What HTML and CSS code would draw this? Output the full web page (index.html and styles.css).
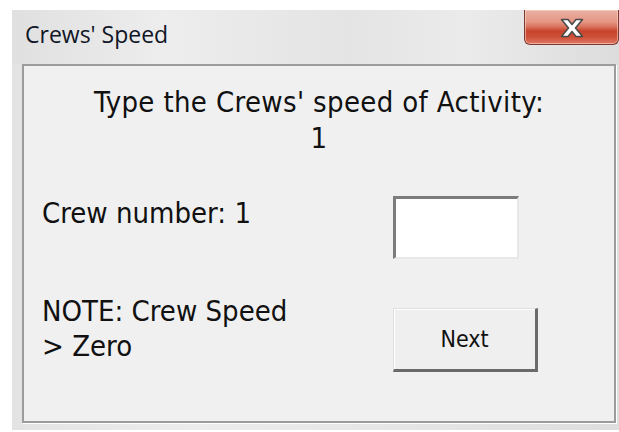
FILE: index.html
```html
<!DOCTYPE html>
<html lang="en">
<head>
<meta charset="utf-8">
<title>Crews' Speed</title>
<link rel="stylesheet" href="styles.css">
</head>
<body>
<div class="window">
  <div class="titlebar">
    <span class="title">Crews' Speed</span>
    <button class="close" type="button" aria-label="Close">
      <svg class="close-x" width="26" height="20" viewBox="0 0 26 20">
        <path d="M2.5 1.5h6.5l4 5 4-5h6.5l-7 8.5 7 8.5H17l-4-5-4 5H2.5l7-8.5z" fill="#ffffff" stroke="#4a4a4a" stroke-width="1.5" stroke-linejoin="round"/>
      </svg>
    </button>
  </div>
  <div class="panel">
    <p class="heading">Type the Crews' speed of Activity:<br>1</p>
    <div class="form">
      <label class="label" for="speed">Crew number: 1</label>
      <input class="field" id="speed" type="text">
      <p class="label">NOTE: Crew Speed &gt; Zero</p>
      <button class="next" type="button">Next</button>
    </div>
  </div>
</div>
</body>
</html>
```

FILE: styles.css
```css
html, body {
  margin: 0;
  padding: 0;
  background: #ffffff;
}

body {
  width: 619px;
  height: 432px;
  overflow: hidden;
}

.window {
  box-sizing: border-box;
  margin: 10px 0 0 12px;
  width: 607px;
  height: 420px;
  background: linear-gradient(90deg, #e3e3e3 0%, #ececec 30%, #e6e6e6 60%, #dedede 100%);
  display: flex;
  flex-direction: column;
}

.titlebar {
  height: 54px;
  display: flex;
  justify-content: space-between;
  align-items: flex-start;
  background: linear-gradient(90deg, #e0e0e0 0%, #ededed 25%, #e4e4e4 55%, #ebebeb 75%, #dcdcdc 100%);
}

.title {
  margin: 9px 0 0 13px;
  font-family: "Open Sans", "Noto Sans", sans-serif;
  font-size: 23px;
  line-height: 30px;
  color: #101626;
}

.close {
  box-sizing: border-box;
  width: 95px;
  height: 35px;
  margin: 0;
  padding: 0;
  border: 1px solid #7d3a2e;
  border-top: none;
  border-radius: 0 0 6px 6px;
  background: linear-gradient(180deg, #eab0a4 0%, #e39683 35%, #d8705a 50%, #c8432b 62%, #cf5038 80%, #dd7a66 100%);
  box-shadow: inset 0 0 0 1px rgba(255, 220, 210, 0.55);
  display: flex;
  align-items: center;
  justify-content: center;
}

.close-x {
  display: block;
  margin-top: 2px;
}

.panel {
  box-sizing: border-box;
  margin: 0 0 0 10px;
  width: 594px;
  height: 359px;
  background: #f0f0f0;
  border: 2px solid #9c9c9c;
  box-shadow: 1px 1px 0 #ffffff;
  padding: 18px 0 0 18px;
  font-family: "DejaVu Sans Condensed", "DejaVu Sans", sans-serif;
  font-stretch: condensed;
  font-size: 29px;
  color: #111111;
}

.heading {
  margin: 0 0 40px -18px;
  line-height: 36px;
  letter-spacing: 0.35px;
  text-align: center;
}

.form {
  display: grid;
  grid-template-columns: 270px auto;
  column-gap: 81px;
  row-gap: 35px;
  align-items: start;
  justify-items: start;
}

.label {
  margin: 0;
  line-height: 35px;
  font-size: 29px;
}

.field {
  box-sizing: border-box;
  width: 126px;
  height: 63px;
  margin: 0;
  background: #ffffff;
  border-style: solid;
  border-width: 3px 2px 2px 3px;
  border-color: #7c7c7c #e8e8e8 #e8e8e8 #7c7c7c;
  outline: none;
}

.next {
  box-sizing: border-box;
  width: 145px;
  height: 64px;
  margin: 14px 0 0 0;
  padding: 0;
  background: #efefef;
  border-style: solid;
  border-width: 1px 3px 3px 1px;
  border-color: #dedede #6a6a6a #6a6a6a #dedede;
  box-shadow: inset 1px 1px 0 #ffffff;
  font-family: "DejaVu Sans Condensed", "DejaVu Sans", sans-serif;
  font-stretch: condensed;
  font-size: 23px;
  color: #111111;
}
```
